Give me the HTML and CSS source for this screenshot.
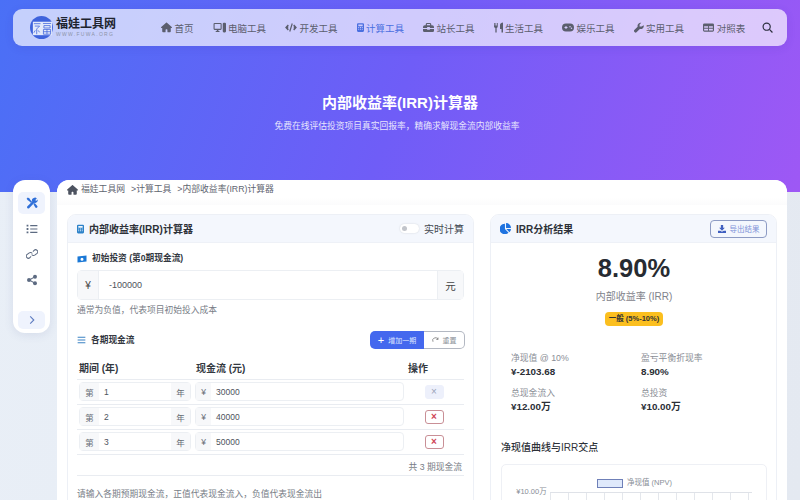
FILE: index.html
```html
<!DOCTYPE html>
<html lang="zh">
<head>
<meta charset="utf-8">
<title>内部收益率(IRR)计算器</title>
<link rel="stylesheet" href="styles.css">
</head>
<body>
<header class="hero">
  <nav class="nav">
    <a class="brand">
      <svg class="logo" viewBox="0 0 24 24"><circle cx="12" cy="12" r="12" fill="#3f63dc"/><rect x="3" y="6" width="20" height="14" fill="#e4eafb"/><path d="M4 8h7M5 10.500h5l-3 3M7 13.500v5.500M5.500 15l-1.500 2.500M8.500 15l1.500 2M13.500 7.800h8.500M14.500 10h6.500v2.500h-6.500zM14 14h7.500v5H14zM17.700 14v5M14 16.400h7.500" stroke="#3f63dc" stroke-width=".8" fill="none"/></svg>
      <span class="brand-text"><b>福娃工具网</b><small>WWW.FUWA.ORG</small></span>
    </a>
    <a class="nav-item"><svg class="ni w11" viewBox="0 0 576 512"><path d="M575 255c0 18-15 32-32 32h-32l1 160c0 35-29 64-64 64H368c-18 0-32-14-32-32V376c0-18-14-32-32-32h-32c-18 0-32 14-32 32v103c0 18-14 32-32 32H128c-35 0-64-29-64-64V287H32c-18 0-32-14-32-32 0-9 3-17 11-24L267 8c7-7 15-8 22-8s15 2 21 7l255 224c8 7 12 15 10 24z"/></svg>首页</a>
    <a class="nav-item"><svg class="ni w13" viewBox="0 0 24 18"><path fill-rule="evenodd" d="M1 2.500a2 2 0 012-2h11a2 2 0 012 2v9a2 2 0 01-2 2H10v2h2v2H5v-2h2v-2H3a2 2 0 01-2-2zm2 0v9h11v-9zM18 2a2 2 0 012-2h2a2 2 0 012 2v14a2 2 0 01-2 2h-2a2 2 0 01-2-2z"/></svg>电脑工具</a>
    <a class="nav-item"><svg class="ni w12" viewBox="0 0 24 18" fill="none" stroke="currentColor" stroke-width="2.400"><path d="M6.500 4L1.800 9l4.700 5M17.500 4l4.700 5-4.700 5M14.500 1L9.500 17"/></svg>开发工具</a>
    <a class="nav-item active"><svg class="ni w7" viewBox="0 0 16 20"><path fill-rule="evenodd" d="M2.500 0h11A2.500 2.500 0 0116 2.500v15a2.500 2.500 0 01-2.500 2.500h-11A2.500 2.500 0 010 17.500v-15A2.500 2.500 0 012.500 0zM3 3v4h10V3zm0 6v2h2V9zm4 0v2h2V9zm4 0v2h2V9zM3 13v2h2v-2zm4 0v2h2v-2zm4 0v2h2v-2z"/></svg>计算工具</a>
    <a class="nav-item"><svg class="ni w11" viewBox="0 0 24 20"><path d="M6 5V3a3 3 0 013-3h6a3 3 0 013 3v2h2a4 4 0 014 4v2H15V9H9v2H0V9a4 4 0 014-4zm2.500 0h7V3a.5.5 0 00-.5-.5H9a.5.5 0 00-.5.5zM0 13h9v2h6v-2h9v4a3 3 0 01-3 3H3a3 3 0 01-3-3z"/></svg>站长工具</a>
    <a class="nav-item"><svg class="ni w9" viewBox="0 0 18 20"><path d="M0 1h1.500v5H3V1h1.500v5H6V1h1.500v7a3 3 0 01-2.200 2.800V20h-2.600v-9.200A3 3 0 010 8zM18 0v20h-3v-7h-3V5c0-3 3-5 6-5z"/></svg>生活工具</a>
    <a class="nav-item"><svg class="ni w12" viewBox="0 0 24 16"><path fill-rule="evenodd" d="M8 0h8a8 8 0 010 16H8A8 8 0 018 0zM5 7v2h2v2h2V9h2V7H9V5H7v2zm11 1a1.500 1.500 0 100-3 1.500 1.500 0 000 3zm3 3a1.500 1.500 0 100-3 1.500 1.500 0 000 3z"/></svg>娱乐工具</a>
    <a class="nav-item"><svg class="ni w10" viewBox="0 0 20 20"><path d="M19.500 5.500c.5 2-.2 4.200-1.800 5.800-1.700 1.600-4 2.100-6 1.500L5 19.500a2.400 2.400 0 01-3.400 0l-1-1a2.400 2.400 0 010-3.400L7.300 8.400c-.7-2.100-.1-4.400 1.500-6C10.400.7 12.600.1 14.600.6l-3.400 3.400v3.900h3.900z"/></svg>实用工具</a>
    <a class="nav-item last"><svg class="ni w11" viewBox="0 0 24 18"><path fill-rule="evenodd" d="M3 0h18a3 3 0 013 3v12a3 3 0 01-3 3H3a3 3 0 01-3-3V3a3 3 0 013-3zm-.500 6v3.500H11V6zm10.500 0v3.500h8.500V6zM2.500 11.500V15.500H11v-4zm10.500 0v4h8.500v-4z"/></svg>对照表</a>
    <svg class="search" viewBox="0 0 20 20" fill="none" stroke="currentColor" stroke-width="2.200"><circle cx="8.500" cy="8.500" r="6.500"/><path d="M13.500 13.500L19 19"/></svg>
  </nav>
  <div class="hero-text">
    <h1>内部收益率(IRR)计算器</h1>
    <p>免费在线评估投资项目真实回报率，精确求解现金流内部收益率</p>
  </div>
</header>

<div class="page">
  <aside class="side">
    <span class="side-btn on"><svg viewBox="0 0 20 20" fill="#2f6fd8"><path d="M1 3l2-2 3 1.500 1 2 3 3-2 2-3-3-2-1zM13 1.500a4 4 0 015 1l-2.500 2.500 1.500 1.500L19 4a4 4 0 01-5 5.500L6 18a2 2 0 01-4-2l8.500-8.500A4 4 0 0113 1.500zM12.500 12l2-2 4 4.500a2 2 0 01-3 3z"/></svg></span>
    <span class="side-btn"><svg viewBox="0 0 20 20" fill="#5d6b82"><path d="M1 3h3v3H1zM7 3.500h12v2H7zM1 8.500h3v3H1zM7 9h12v2H7zM1 14h3v3H1zM7 14.500h12v2H7z"/></svg></span>
    <span class="side-btn"><svg viewBox="0 0 20 20" fill="none" stroke="#5d6b82" stroke-width="1.700"><path d="M8.500 14l-2 2a3.500 3.500 0 01-5-5l4-3a3.500 3.500 0 015 1M11.500 6l2-2a3.500 3.500 0 015 5l-4 3a3.500 3.500 0 01-5-1"/></svg></span>
    <span class="side-btn"><svg viewBox="0 0 20 20" fill="#5d6b82"><circle cx="15" cy="4.500" r="3.300"/><circle cx="5" cy="10" r="3.300"/><circle cx="15" cy="15.500" r="3.300"/><path d="M5 9.200l10-5.500.8 1.500-10 5.500zM5.800 9.300l10 5.500-.8 1.500-10-5.500z"/></svg></span>
    <span class="side-btn toggle"><svg viewBox="0 0 10 16" fill="none" stroke="#5d7bc0" stroke-width="1.800"><path d="M2 2l6 6-6 6"/></svg></span>
  </aside>

  <main class="main">
    <div class="crumbs">
      <svg viewBox="0 0 576 512"><path d="M575 255c0 18-15 32-32 32h-32l1 160c0 35-29 64-64 64H368c-18 0-32-14-32-32V376c0-18-14-32-32-32h-32c-18 0-32 14-32 32v103c0 18-14 32-32 32H128c-35 0-64-29-64-64V287H32c-18 0-32-14-32-32 0-9 3-17 11-24L267 8c7-7 15-8 22-8s15 2 21 7l255 224c8 7 12 15 10 24z"/></svg>
      <span>福娃工具网</span><span class="sep">&gt;计算工具</span><span class="sep">&gt;内部收益率(IRR)计算器</span>
    </div>

    <div class="cols">
      <section class="panel left">
        <div class="panel-head">
          <h2><svg class="ph-ico calc" viewBox="0 0 16 20"><path fill-rule="evenodd" d="M2.500 0h11A2.500 2.500 0 0116 2.500v15a2.500 2.500 0 01-2.500 2.500h-11A2.500 2.500 0 010 17.500v-15A2.500 2.500 0 012.500 0zM3 3v4h10V3zm0 6v2h2V9zm4 0v2h2V9zm4 0v2h2V9zM3 13v2h2v-2zm4 0v2h2v-2zm4 0v2h2v-2z"/></svg>内部收益率(IRR)计算器</h2>
          <label class="switch"><span class="track"><i></i></span>实时计算</label>
        </div>
        <div class="panel-body">
          <h3 class="label"><svg class="cash" viewBox="0 0 20 14"><path fill-rule="evenodd" d="M1 2l18-2v12L1 14zm9 2.500a3 3 0 100 6 3 3 0 000-6z"/></svg>初始投资 (第0期现金流)</h3>
          <div class="group big"><span class="addon yen">¥</span><span class="field">-100000</span><span class="addon unit">元</span></div>
          <p class="hint">通常为负值，代表项目初始投入成本</p>

          <div class="flows-head">
            <h3 class="label"><svg class="list" viewBox="0 0 14 12"><path d="M1 1h12v1.600H1zM1 5.200h12v1.600H1zM1 9.400h12V11H1z"/></svg>各期现金流</h3>
            <div class="btns">
              <button class="btn add"><b>+</b>增加一期</button>
              <button class="btn reset"><svg viewBox="0 0 14 14" fill="none" stroke="currentColor" stroke-width="1.400"><path d="M12 4.500A5.500 5.500 0 102 9.500M12 1v3.800H8.500"/></svg>重置</button>
            </div>
          </div>

          <table class="flows">
            <thead><tr><th class="c1">期间 (年)</th><th>现金流 (元)</th><th class="c3">操作</th></tr></thead>
            <tbody>
              <tr>
                <td><div class="group"><span class="addon">第</span><span class="field">1</span><span class="addon">年</span></div></td>
                <td><div class="group"><span class="addon narrow">¥</span><span class="field">30000</span></div></td>
                <td class="op"><span class="del off">×</span></td>
              </tr>
              <tr>
                <td><div class="group"><span class="addon">第</span><span class="field">2</span><span class="addon">年</span></div></td>
                <td><div class="group"><span class="addon narrow">¥</span><span class="field">40000</span></div></td>
                <td class="op"><span class="del">×</span></td>
              </tr>
              <tr>
                <td><div class="group"><span class="addon">第</span><span class="field">3</span><span class="addon">年</span></div></td>
                <td><div class="group"><span class="addon narrow">¥</span><span class="field">50000</span></div></td>
                <td class="op"><span class="del">×</span></td>
              </tr>
            </tbody>
          </table>
          <div class="total">共 3 期现金流</div>
          <p class="hint note">请输入各期预期现金流，正值代表现金流入，负值代表现金流出</p>
        </div>
      </section>

      <section class="panel right">
        <div class="panel-head">
          <h2><svg class="ph-ico pie" viewBox="0 0 20 20"><path d="M9 1.500v9.500l6.500 6.500A9.500 9.500 0 119 1.500zM11 0a9 9 0 019 9h-9zM11.500 11H20a9 9 0 01-2.800 6z"/></svg>IRR分析结果</h2>
          <button class="export"><svg viewBox="0 0 14 14"><path d="M5 0h4v5h3L7 10 2 5h3zM0 10h4l3 2 3-2h4v4H0z"/></svg>导出结果</button>
        </div>
        <div class="panel-body result">
          <div class="irr">8.90%</div>
          <div class="irr-label">内部收益率 (IRR)</div>
          <span class="badge">一般 (5%-10%)</span>
          <dl class="stats">
            <div><dt>净现值 @ 10%</dt><dd>¥-2103.68</dd></div>
            <div><dt>盈亏平衡折现率</dt><dd>8.90%</dd></div>
            <div><dt>总现金流入</dt><dd>¥12.00万</dd></div>
            <div><dt>总投资</dt><dd>¥10.00万</dd></div>
          </dl>
          <h4 class="chart-title">净现值曲线与IRR交点</h4>
          <div class="chart">
            <div class="legend"><i></i>净现值 (NPV)</div>
            <div class="plot"><span class="tick">¥10.00万</span><div class="grid"></div></div>
          </div>
        </div>
      </section>
    </div>
  </main>
</div>
</body>
</html>
```

FILE: styles.css
```css
* { box-sizing: border-box; }
html, body { margin: 0; height: 500px; overflow: hidden; }
body {
  font-family: "Liberation Sans", "Noto Sans CJK SC", sans-serif;
  background: linear-gradient(100deg, #e9eff7, #e4e9f1);
  color: #2b3038;
}
.hero {
  height: 192px;
  padding: 9px 13px 0;
  background: linear-gradient(110deg, #4a70f6 0%, #6f5df7 50%, #9e58f5 100%);
}
.nav {
  height: 37px;
  display: flex;
  align-items: center;
  padding: 0 16px 0 17px;
  border-radius: 9px;
  background: rgba(255, 255, 255, .68);
  box-shadow: 0 2px 8px rgba(60, 50, 160, .12);
}
.brand { display: flex; align-items: center; gap: 3px; margin-right: 43px; }
.logo { width: 23px; height: 23px; }
.brand-text { display: flex; flex-direction: column; width: 62px; }
.brand-text b { font-size: 12px; line-height: 14px; color: #20242e; white-space: nowrap; }
.brand-text small { font-size: 5px; line-height: 7px; letter-spacing: 1.300px; color: #8d93a8; white-space: nowrap; }
.nav-item {
  display: flex;
  align-items: center;
  gap: 2.500px;
  font-size: 9.500px;
  color: #5b5e6e;
  white-space: nowrap;
  margin-right: 19px;
}
.nav-item.active { color: #4a6fe0; }
.nav-item.last { margin-right: 17px; }
.ni { height: 11px; fill: currentColor; flex: none; }
.w7 { width: 7px; }
.w9 { width: 9px; }
.w10 { width: 10px; }
.w11 { width: 11px; }
.w12 { width: 12px; }
.w13 { width: 13px; }
.search { width: 11px; height: 11px; flex: none; color: #2e3140; }
.hero-text { text-align: center; margin-top: 46px; color: #fff; }
.hero-text h1 { margin: 0; font-size: 15px; line-height: 22px; font-weight: 700; }
.hero-text p { margin: 6px 6px 0 0; font-size: 8.750px; line-height: 12px; color: #e7e5fd; }

.page { display: flex; align-items: flex-start; gap: 7px; margin-top: -12px; padding: 0 13px; }
.side {
  flex: none;
  width: 37px;
  height: 153px;
  padding: 12px 5px 0;
  display: flex;
  flex-direction: column;
  background: #fff;
  border-radius: 12px;
  box-shadow: 0 2px 10px rgba(70, 90, 150, .12);
}
.side-btn {
  display: flex;
  align-items: center;
  justify-content: center;
  height: 22px;
  margin-bottom: 3.500px;
  border-radius: 5px;
}
.side-btn svg { width: 12px; height: 12px; }
.side-btn.on { background: #eff3fd; }
.side-btn.toggle { height: 18px; margin: auto 0 4px; background: #eff3fd; }
.side-btn.toggle svg { width: 6px; height: 10px; }

.main {
  flex: 1;
  height: 340px;
  padding: 0 10px;
  background: #fff;
  border-radius: 12px 12px 0 0;
}
.crumbs {
  height: 25px;
  margin: 0 -10px 9px;
  padding: 3px 10px 0;
  display: flex;
  align-items: flex-start;
  font-size: 8.800px;
  line-height: 13px;
  color: #5f6570;
  background: linear-gradient(#fff 70%, #fbfbfc);
  border-radius: 12px 12px 0 0;
}
.crumbs svg { width: 11px; height: 10px; margin: 2px 3px 0 0; fill: #4d5360; }
.sep { margin-left: 6px; }
.cols { display: flex; gap: 16px; align-items: flex-start; }
.panel { border: 1px solid #edf0f6; border-radius: 9px; height: 400px; overflow: hidden; }
.left { width: 407px; flex: none; }
.right { flex: 1; }
.panel-head {
  height: 28px;
  display: flex;
  align-items: center;
  justify-content: space-between;
  padding: 0 9px;
  background: #f4f7fd;
  border-bottom: 1px solid #eef1f7;
}
.panel-head h2 { display: flex; align-items: center; margin: 0; font-size: 10px; font-weight: 700; color: #2d3138; }
.ph-ico { margin-right: 5px; }
.calc { width: 7px; height: 10px; fill: #2c82c9; }
.pie { width: 11px; height: 11px; fill: #1f73e0; }
.switch { display: flex; align-items: center; gap: 5px; font-size: 10px; color: #444a52; }
.track { width: 19px; height: 9px; border-radius: 5px; background: #fff; box-shadow: 0 0 2px rgba(0,0,0,.15); padding: 2px; display: block; }
.track i { display: block; width: 5px; height: 5px; border-radius: 50%; background: #c2c5cb; }
.panel-body { padding: 9px 9px 0; }
.label { display: flex; align-items: center; margin: 0; font-size: 8.700px; line-height: 13px; font-weight: 700; color: #33383f; }
.cash { width: 10px; height: 8px; margin-right: 5px; fill: #1a78d6; }
.list { width: 9px; height: 8px; margin-right: 5px; fill: #3b82c4; }
.group { display: flex; height: 19px; border: 1px solid #eceff3; border-radius: 4px; font-size: 8.500px; color: #4d535c; background: #fff; }
.group.big { height: 30px; margin-top: 5px; font-size: 9px; border-radius: 5px; }
.addon { display: flex; align-items: center; justify-content: center; width: 19px; flex: none; background: #f7f8fa; color: #666c75; }
.addon.narrow { width: 15px; }
.addon.yen { width: 21px; border-right: 1px solid #eceff3; color: #444; font-size: 10px; }
.addon.unit { width: 26px; border-left: 1px solid #eceff3; color: #444; font-size: 10.500px; }
.field { flex: 1; display: flex; align-items: center; padding-left: 5px; }
.group.big .field { padding-left: 10px; }
.hint { margin: 4px 0 0; font-size: 8.750px; line-height: 13px; color: #777d86; }
.flows-head { display: flex; align-items: center; justify-content: space-between; margin-top: 14px; }
.btns { display: flex; height: 18px; margin-right: -1px; }
.btn { display: flex; align-items: center; border: 0; padding: 0; font: inherit; font-size: 7px; white-space: nowrap; }
.btn.add { width: 54px; justify-content: center; gap: 4px; color: #dfe6ff; background: #4468ee; border-radius: 5px 0 0 5px; }
.btn.add b { font-size: 11px; line-height: 10px; font-weight: 400; color: #fff; }
.btn.reset { width: 41px; justify-content: center; gap: 4px; color: #8a8f98; background: #fff; border: 1px solid #b3b8c2; border-left: 0; border-radius: 0 5px 5px 0; }
.btn.reset svg { width: 7px; height: 7px; color: #666; }
.flows { width: 100%; margin-top: 9px; border-collapse: collapse; table-layout: fixed; }
.flows th { height: 21px; padding: 0 2px 1px; text-align: left; font-size: 10px; font-weight: 700; color: #33383f; border-bottom: 1px solid #e9ecf1; }
.flows td { height: 25px; padding: 0 1px; border-bottom: 1px solid #e9ecf1; }
.flows th.c1, .flows tr td:first-child { width: 117px; padding-left: 2px; padding-right: 2px; }
.flows th.c3 { width: 60px; padding-left: 4px; }
.flows tr td:nth-child(2) { padding-right: 0; }
.flows tr td:first-child .group { margin-right: 1px; }
.op { text-align: center; }
.del {
  display: inline-flex;
  align-items: center;
  justify-content: center;
  width: 19px;
  height: 14px;
  border: 1px solid #c98f96;
  border-radius: 3px;
  font-size: 10px;
  line-height: 1;
  font-weight: 700;
  color: #cf4655;
  vertical-align: middle;
}
.del.off { border-color: #edf0fb; background: #edf0fb; color: #9ba3b8; font-weight: 400; }
.total { height: 21px; padding: 3px 2px 0 0; display: flex; align-items: center; justify-content: flex-end; font-size: 8.750px; color: #777d86; border-bottom: 1px solid #e9ecf1; }
.note { margin-top: 12px; }
.export {
  display: flex;
  align-items: center;
  gap: 4px;
  width: 57px;
  height: 18px;
  justify-content: center;
  border: 1px solid #8d9bc4;
  border-radius: 4px;
  background: transparent;
  font: inherit;
  font-size: 7.500px;
  color: #7f93d8;
  padding: 0;
}
.export svg { width: 8px; height: 8px; fill: #3f5fc0; }
.result { padding: 0 9px 0 10px; text-align: center; }
.irr { margin-top: 10px; font-size: 25.500px; line-height: 31px; font-weight: 700; color: #272b31; }
.irr-label { margin-top: 5px; font-size: 10px; line-height: 15px; color: #7f838b; }
.badge { display: inline-block; margin-top: 8px; padding: 0 4px; height: 14px; border-radius: 4px; background: #fbbf1f; font-size: 7.500px; line-height: 14px; font-weight: 700; color: #343434; }
.stats { display: grid; grid-template-columns: 130px 1fr; gap: 7px 0; margin: 25px 0 0; padding-left: 10px; text-align: left; }
.stats dt { font-size: 8.800px; line-height: 14px; color: #8a8e96; }
.stats dd { margin: 0; font-size: 9.800px; line-height: 14px; font-weight: 700; color: #2a2e35; }
.chart-title { margin: 26px 0 0; text-align: left; font-size: 10px; line-height: 16px; font-weight: 500; color: #2d3138; }
.chart { height: 120px; margin-top: 8px; padding-top: 13px; border: 1px solid #eef0f5; border-radius: 5px; }
.legend { display: flex; align-items: center; justify-content: center; gap: 4px; font-size: 7.500px; line-height: 10px; color: #888d96; padding-left: 1px; }
.legend i { width: 26px; height: 9px; background: #dfe9fb; border: 1px solid #6f80b8; }
.plot { display: flex; align-items: flex-start; margin-top: 4px; padding-left: 11px; }
.tick { width: 37px; font-size: 7.500px; line-height: 10px; color: #888d96; margin-top: -5px; }
.grid { flex: none; width: 202px; height: 60px; border-top: 1px solid #dfe2e8; background: repeating-linear-gradient(90deg, #e4e7ec 0 1px, transparent 1px 18px); }
```
